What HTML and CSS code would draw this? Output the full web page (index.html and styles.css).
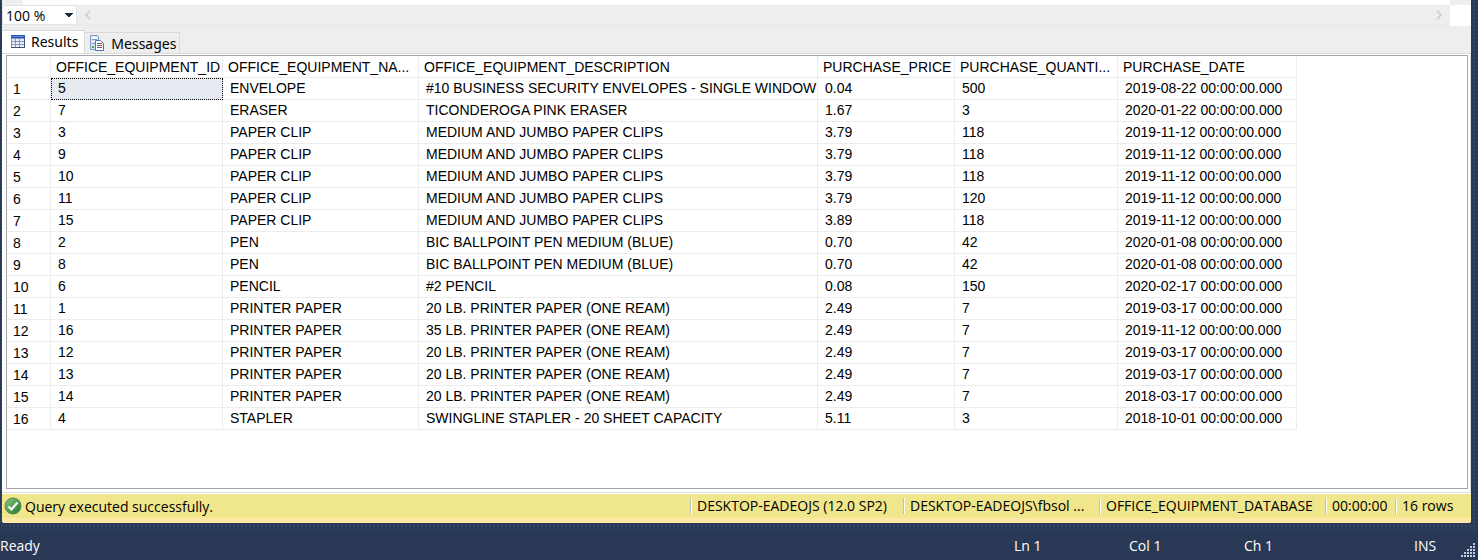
FILE: index.html
```
<!DOCTYPE html>
<html lang="en">
<head>
    <meta charset="UTF-8">
    <meta name="viewport" content="width=device-width, initial-scale=1.0">
    <title>Query Results</title>
    <link rel="stylesheet" href="styles.css">
</head>
<body>
<main class="window">
    <div class="editor-edge"><div class="editor-end"></div></div>
    <div class="zoom-bar">
        <select class="zoom-select" aria-label="Zoom">
            <option>100 %</option>
        </select>
        <div class="scrollbar">
            <button class="scroll-btn" aria-label="Scroll left">
                <svg width="8" height="10" viewBox="0 0 8 10"><path d="M7 1 3 5l4 4" fill="none" stroke="#d2d2d2" stroke-width="2"/></svg>
            </button>
            <button class="scroll-btn" aria-label="Scroll right">
                <svg width="8" height="10" viewBox="0 0 8 10"><path d="M1 1l4 4-4 4" fill="none" stroke="#d2d2d2" stroke-width="2"/></svg>
            </button>
        </div>
        <div class="corner"></div>
    </div>

    <div class="tabs">
        <button class="tab active">
            <svg width="14" height="13" viewBox="0 0 14 13">
                <path d="M0 0h14v13H0z" fill="#8795b8"/>
                <path d="M0 0h14v3H0z" fill="#2c55b4"/>
                <path d="M1 1h12v1H1z" fill="#5b86dc"/>
                <path d="M13 3h1v10H0v-1h13z" fill="#3d4f80"/>
                <path d="M1 4h3v2H1zM5 4h3v2H5zM9 4h4v2H9zM1 7h3v2H1zM5 7h3v2H5zM9 7h4v2H9zM1 10h3v2H1zM5 10h3v2H5zM9 10h4v2H9z" fill="#e8f0fc"/>
            </svg>
            Results
        </button>
        <button class="tab">
            <svg width="15" height="16" viewBox="0 0 15 16">
                <path d="M.5.5h7l1 1v13h-8z" fill="#d9e6f5" stroke="#7a9cc6"/>
                <path d="M2 2h5v2H2zM2 6h4v1H2z" fill="#fff"/>
                <path d="M2 4h5v1H2zM2 8h3v1H2z" fill="#7a9cc6"/>
                <path d="M2 11h2v2H2z" fill="#4aa04a"/>
                <path d="M5.500 5.500h5l3 3v7h-8z" fill="#fff" stroke="#4f74b0"/>
                <path d="M7 8h2v1H7zM7 10h2v1H7zM7 12h2v1H7z" fill="#345fae"/>
                <path d="M9 8h3v1H9zM9 10h3v1H9zM9 12h3v1H9z" fill="#d8442c"/>
            </svg>
            Messages
        </button>
    </div>

    <div class="grid-frame">
        <div class="grid-pane">
            <table class="results">
                <colgroup>
                    <col class="col-row"><col class="col-id"><col class="col-name"><col class="col-desc">
                    <col class="col-price"><col class="col-qty"><col class="col-date">
                </colgroup>
                <thead>
                    <tr><th></th><th>OFFICE_EQUIPMENT_ID</th><th>OFFICE_EQUIPMENT_NA...</th><th>OFFICE_EQUIPMENT_DESCRIPTION</th><th>PURCHASE_PRICE</th><th>PURCHASE_QUANTI...</th><th>PURCHASE_DATE</th></tr>
                </thead>
                <tbody>
                    <tr><th>1</th><td class="selected">5</td><td>ENVELOPE</td><td>#10 BUSINESS SECURITY ENVELOPES - SINGLE WINDOW</td><td>0.04</td><td>500</td><td>2019-08-22 00:00:00.000</td></tr>
                    <tr><th>2</th><td>7</td><td>ERASER</td><td>TICONDEROGA PINK ERASER</td><td>1.67</td><td>3</td><td>2020-01-22 00:00:00.000</td></tr>
                    <tr><th>3</th><td>3</td><td>PAPER CLIP</td><td>MEDIUM AND JUMBO PAPER CLIPS</td><td>3.79</td><td>118</td><td>2019-11-12 00:00:00.000</td></tr>
                    <tr><th>4</th><td>9</td><td>PAPER CLIP</td><td>MEDIUM AND JUMBO PAPER CLIPS</td><td>3.79</td><td>118</td><td>2019-11-12 00:00:00.000</td></tr>
                    <tr><th>5</th><td>10</td><td>PAPER CLIP</td><td>MEDIUM AND JUMBO PAPER CLIPS</td><td>3.79</td><td>118</td><td>2019-11-12 00:00:00.000</td></tr>
                    <tr><th>6</th><td>11</td><td>PAPER CLIP</td><td>MEDIUM AND JUMBO PAPER CLIPS</td><td>3.79</td><td>120</td><td>2019-11-12 00:00:00.000</td></tr>
                    <tr><th>7</th><td>15</td><td>PAPER CLIP</td><td>MEDIUM AND JUMBO PAPER CLIPS</td><td>3.89</td><td>118</td><td>2019-11-12 00:00:00.000</td></tr>
                    <tr><th>8</th><td>2</td><td>PEN</td><td>BIC BALLPOINT PEN MEDIUM (BLUE)</td><td>0.70</td><td>42</td><td>2020-01-08 00:00:00.000</td></tr>
                    <tr><th>9</th><td>8</td><td>PEN</td><td>BIC BALLPOINT PEN MEDIUM (BLUE)</td><td>0.70</td><td>42</td><td>2020-01-08 00:00:00.000</td></tr>
                    <tr><th>10</th><td>6</td><td>PENCIL</td><td>#2 PENCIL</td><td>0.08</td><td>150</td><td>2020-02-17 00:00:00.000</td></tr>
                    <tr><th>11</th><td>1</td><td>PRINTER PAPER</td><td>20 LB. PRINTER PAPER (ONE REAM)</td><td>2.49</td><td>7</td><td>2019-03-17 00:00:00.000</td></tr>
                    <tr><th>12</th><td>16</td><td>PRINTER PAPER</td><td>35 LB. PRINTER PAPER (ONE REAM)</td><td>2.49</td><td>7</td><td>2019-11-12 00:00:00.000</td></tr>
                    <tr><th>13</th><td>12</td><td>PRINTER PAPER</td><td>20 LB. PRINTER PAPER (ONE REAM)</td><td>2.49</td><td>7</td><td>2019-03-17 00:00:00.000</td></tr>
                    <tr><th>14</th><td>13</td><td>PRINTER PAPER</td><td>20 LB. PRINTER PAPER (ONE REAM)</td><td>2.49</td><td>7</td><td>2019-03-17 00:00:00.000</td></tr>
                    <tr><th>15</th><td>14</td><td>PRINTER PAPER</td><td>20 LB. PRINTER PAPER (ONE REAM)</td><td>2.49</td><td>7</td><td>2018-03-17 00:00:00.000</td></tr>
                    <tr><th>16</th><td>4</td><td>STAPLER</td><td>SWINGLINE STAPLER - 20 SHEET CAPACITY</td><td>5.11</td><td>3</td><td>2018-10-01 00:00:00.000</td></tr>
                </tbody>
            </table>
        </div>
    </div>

    <div class="query-status">
        <svg width="18" height="18" viewBox="0 0 18 18">
            <defs>
                <linearGradient id="ok" x1="0" y1="0" x2="1" y2="1"><stop offset="0" stop-color="#8ccb82"/><stop offset="1" stop-color="#1f7426"/></linearGradient>
            </defs>
            <circle cx="9" cy="9" r="8" fill="url(#ok)" stroke="#4b8a4c"/>
            <path d="M4.500 9.500l3 3 6-7" fill="none" stroke="#fff" stroke-width="2"/>
        </svg>
        <span class="message">Query executed successfully.</span>
        <span class="cell server">DESKTOP-EADEOJS (12.0 SP2)</span>
        <span class="cell user">DESKTOP-EADEOJS\fbsol ...</span>
        <span class="cell database">OFFICE_EQUIPMENT_DATABASE</span>
        <span class="cell time">00:00:00</span>
        <span class="cell rows">16 rows</span>
    </div>
</main>

<footer class="status-bar">
    <span class="ready">Ready</span>
    <span class="pos">Ln 1</span>
    <span class="pos">Col 1</span>
    <span class="pos last">Ch 1</span>
    <span class="ins">INS</span>
    <svg width="14" height="14" viewBox="0 0 14 14">
        <path d="M12 0h2v2h-2zM9 3h2v2H9zM12 3h2v2h-2zM6 6h2v2H6zM9 6h2v2H9zM12 6h2v2h-2zM3 9h2v2H3zM6 9h2v2H6zM9 9h2v2H9zM12 9h2v2h-2zM0 12h2v2H0zM3 12h2v2H3zM6 12h2v2H6zM9 12h2v2H9zM12 12h2v2h-2z" fill="#c3cad8"/>
    </svg>
</footer>
</body>
</html>
```
FILE: styles.css
```
* {
    box-sizing: border-box;
}
body {
    margin: 0;
    min-height: 100vh;
    display: flex;
    flex-direction: column;
    background-color: #293955;
    background-image: radial-gradient(#35496a 1px, transparent 1px);
    background-size: 4px 4px;
    font-family: "Open Sans", "Segoe UI", sans-serif;
    font-size: 14px;
    color: #000;
}
button {
    border: none;
    padding: 0;
    background: none;
    font: inherit;
    color: inherit;
}
.window {
    flex: 1;
    display: flex;
    flex-direction: column;
    margin: 0 7px 0 2px;
    background-color: #eee;
    border-radius: 0 0 3px 3px;
    overflow: hidden;
}
.editor-edge {
    display: flex;
    justify-content: flex-end;
    height: 5px;
    margin-left: 21px;
    background-color: #fff;
}
.editor-end {
    width: 21px;
    background-color: #eee;
}
.zoom-bar {
    display: flex;
    height: 21px;
}
.zoom-select {
    width: 75px;
    height: 20px;
    padding: 0 3px;
    border: 1px solid #e3e3e3;
    border-radius: 0;
    appearance: none;
    background-color: #fff;
    background-image: conic-gradient(from 315deg at 50% 100%, #1b293e 90deg, #fff 0);
    background-repeat: no-repeat;
    background-size: 8px 4px;
    background-position: right 3px center;
    font: inherit;
    color: #000;
}
.scrollbar {
    flex: 1;
    display: flex;
    justify-content: space-between;
    border-bottom: 1px solid #e8e8e8;
}
.scroll-btn {
    width: 20px;
    display: flex;
    align-items: center;
    justify-content: center;
}
.corner {
    width: 21px;
    background-color: #fff;
}
.tabs {
    display: flex;
    align-items: flex-end;
    height: 27px;
    padding-top: 4px;
    font-family: "Noto Sans", Tahoma, sans-serif;
}
.tab {
    display: flex;
    align-items: center;
    gap: 6px;
    height: 21px;
    padding: 0 3px 0 5px;
    border: 1px solid #d9d9d9;
    border-left: none;
    border-bottom: none;
}
.tab.active {
    height: 23px;
    padding: 0 6px 2px 9px;
    background-color: #fff;
}
.grid-frame {
    flex: 1;
    display: flex;
    padding: 1px 2px 3px 4px;
    border: 1px solid #d9dbdd;
    border-left: none;
    background-color: #fff;
}
.grid-pane {
    flex: 1;
    border: 1px solid #a3a3a8;
    background-color: #fff;
}
.results {
    table-layout: fixed;
    width: 1290px;
    border-collapse: separate;
    border-spacing: 0;
    font-family: "Liberation Sans", Arial, sans-serif;
    line-height: 20px;
}
.col-row {
    width: 44px;
}
.col-id {
    width: 172px;
}
.col-name {
    width: 196px;
}
.col-desc {
    width: 399px;
}
.col-price {
    width: 137px;
}
.col-qty {
    width: 163px;
}
.col-date {
    width: 179px;
}
.results th, .results td {
    height: 22px;
    padding: 0 0 1px 7px;
    border-right: 1px solid #ececec;
    border-bottom: 1px solid #ececec;
    font-weight: normal;
    text-align: left;
    white-space: nowrap;
}
.results thead th {
    padding: 1px 0 0 5px;
}
.results tbody th {
    padding: 1px 0 0 6px;
}
.results td.selected {
    background-color: #e6ebf1;
    outline: 1px dotted #000;
    outline-offset: -1px;
}
.query-status {
    display: flex;
    align-items: center;
    height: 30px;
    padding: 0 0 0 2px;
    border-top: 1px solid #fff;
    border-bottom: 5px solid #ffe8a6;
    background-color: #f0e68c;
}
.message {
    flex: 1;
    padding-left: 3px;
}
.cell {
    height: 16px;
    line-height: 16px;
    padding-left: 6px;
    border-left: 1px solid #bdbdbd;
    box-shadow: inset 1px 0 #fff;
    white-space: nowrap;
}
.server {
    width: 213px;
}
.user {
    width: 196px;
}
.database {
    width: 226px;
}
.time {
    width: 70px;
}
.rows {
    width: 76px;
}
.status-bar {
    display: flex;
    align-items: center;
    height: 30px;
    margin-top: 7px;
    background-color: #293955;
    color: #fff;
}
.ready {
    flex: 1;
}
.pos {
    width: 115px;
}
.pos.last {
    width: 170px;
}
.ins {
    width: 47px;
}
.status-bar svg {
    align-self: flex-end;
    margin: 0 3px 3px 0;
}
```
